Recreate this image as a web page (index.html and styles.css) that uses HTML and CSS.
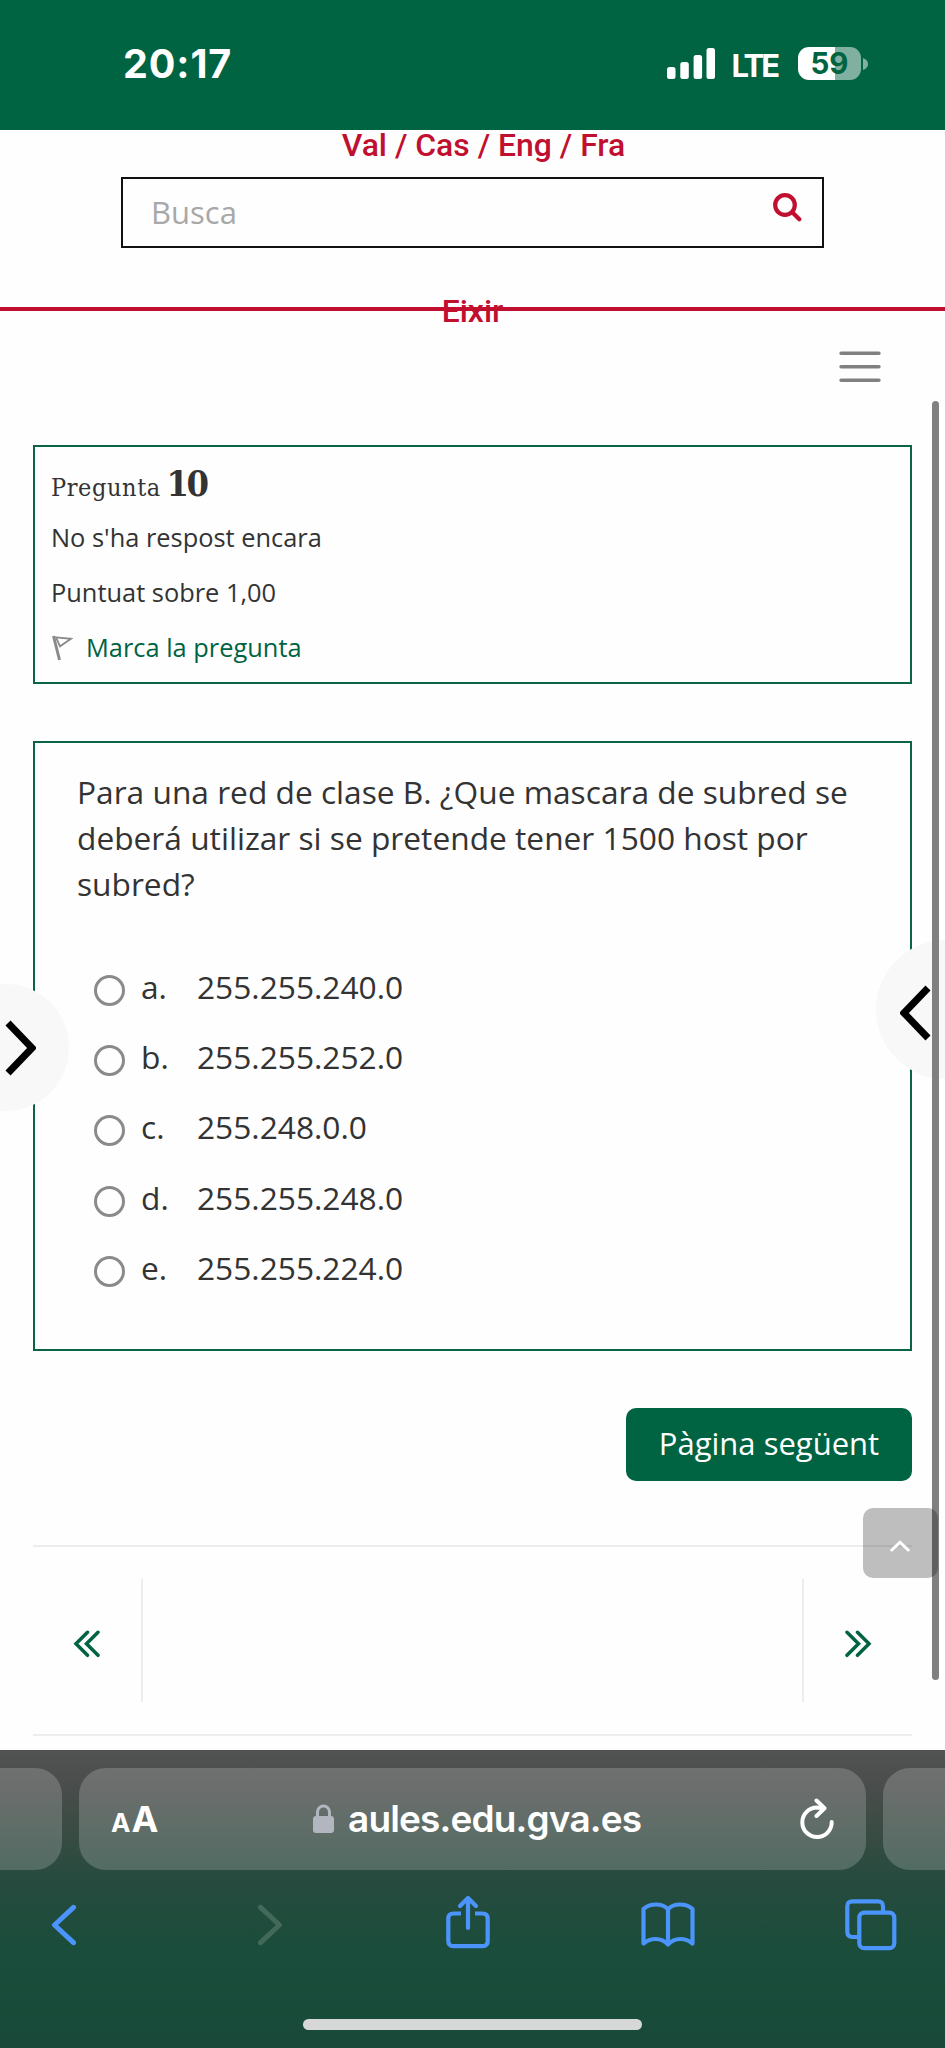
FILE: index.html
```html
<!DOCTYPE html>
<html lang="ca">
<head>
<meta charset="utf-8">
<title>Aules</title>
<link rel="stylesheet" href="styles.css">
</head>
<body>
<div class="screen">
  <header class="status">
    <span class="time">20:17</span>
    <div class="indicators">
      <svg class="signal" width="48" height="31" viewBox="0 0 48 31" fill="#fff"><rect x="0" y="19" width="8.5" height="12" rx="2.5"/><rect x="13.3" y="14" width="8.5" height="17" rx="2.5"/><rect x="26.6" y="7" width="8.5" height="24" rx="2.5"/><rect x="39.5" y="0" width="8.5" height="31" rx="2.5"/></svg>
      <span class="lte">LTE</span>
      <div class="battery"><span class="level">59</span></div>
      <svg class="nub" width="5" height="12" viewBox="0 0 5 12"><path d="M0 0Q5 2 5 6T0 12Z" fill="#80b1a0"/></svg>
    </div>
  </header>

  <div class="site-head">
    <nav class="langs">Val / Cas / Eng / Fra</nav>
    <div class="search">
      <span class="placeholder">Busca</span>
      <svg class="search-icon" width="29" height="29" viewBox="0 0 29 29" fill="none" stroke="#c10f2f" stroke-linecap="round"><circle cx="12" cy="12" r="9.8" stroke-width="4.2"/><path d="M19.5 19.5L26.3 26.3" stroke-width="4.2"/></svg>
    </div>
    <div class="logout"><a class="exit">Eixir</a></div>
  </div>

  <main class="content">
    <div class="menu-row">
      <svg width="42" height="32" viewBox="0 0 42 32" stroke="#808080" stroke-width="3.4" stroke-linecap="round"><path d="M2 2.3H40M2 15.8H40M2 29.3H40"/></svg>
    </div>
    <section class="card info">
      <h3 class="qno">Pregunta <b class="num">10</b></h3>
      <p class="meta">No s'ha respost encara</p>
      <p class="meta">Puntuat sobre 1,00</p>
      <p class="meta flag">
        <svg width="22" height="26" viewBox="0 0 22 26" fill="none" stroke="#8a8a8a"><path d="M2.5 1L8.5 25" stroke-width="3"/><path d="M5 2.3L20 3.8L9 11.3Z" stroke-width="1.8"/></svg>
        <a class="mark">Marca la pregunta</a>
      </p>
    </section>
    <section class="card question">
      <p class="qtext">Para una red de clase B. ¿Que mascara de subred se<br>deberá utilizar si se pretende tener 1500 host por<br>subred?</p>
      <div class="answers">
        <div class="answer"><i class="radio"></i><span class="letter">a.</span><span class="value">255.255.240.0</span></div>
        <div class="answer"><i class="radio"></i><span class="letter">b.</span><span class="value">255.255.252.0</span></div>
        <div class="answer"><i class="radio"></i><span class="letter">c.</span><span class="value">255.248.0.0</span></div>
        <div class="answer"><i class="radio"></i><span class="letter">d.</span><span class="value">255.255.248.0</span></div>
        <div class="answer"><i class="radio"></i><span class="letter">e.</span><span class="value">255.255.224.0</span></div>
      </div>
    </section>
    <div class="actions"><div class="next">Pàgina següent</div></div>
    <nav class="pager">
      <div class="prev-act"><svg width="28" height="28" viewBox="0 0 28 28" fill="none" stroke="#006442" stroke-width="3.5" stroke-linecap="round"><path d="M14.5 2.3L3 13.8L14.5 25.3M25 2.3L13.5 13.8L25 25.3"/></svg></div>
      <div class="next-act"><svg width="28" height="28" viewBox="0 0 28 28" fill="none" stroke="#006442" stroke-width="3.5" stroke-linecap="round"><path d="M3 2.3L14.5 13.8L3 25.3M13.5 2.3L25 13.8L13.5 25.3"/></svg></div>
    </nav>
  </main>

  <footer class="safari">
    <div class="tabs">
      <div class="tab side-left"></div>
      <div class="tab current">
        <span class="aa"><small class="a-small">A</small>A</span>
        <div class="address">
          <svg width="21" height="29" viewBox="0 0 21 29"><rect x="0" y="12" width="21" height="17" rx="3" fill="#b2b7bf"/><path d="M4.5 13V8a6 6 0 0 1 12 0V13" fill="none" stroke="#b2b7bf" stroke-width="3"/></svg>
          <span class="url">aules.edu.gva.es</span>
        </div>
        <svg class="reload" width="34" height="42" viewBox="0 0 34 42" fill="none" stroke="#fff" stroke-width="4" stroke-linecap="round" stroke-linejoin="round"><path d="M31.7 24A14.7 14.7 0 1 1 17 9.6L23 10.3"/><path d="M16.5 2.5L24.5 10.3L16.5 18"/></svg>
      </div>
      <div class="tab side-right"></div>
    </div>
    <div class="toolbar">
      <svg class="back" width="26" height="42" viewBox="0 0 26 42" fill="none" stroke="#4a94fb" stroke-width="5" stroke-linecap="round" stroke-linejoin="round"><path d="M22.5 3.3L3.5 21L22.5 38.7"/></svg>
      <svg class="forward" width="26" height="42" viewBox="0 0 26 42" fill="none" stroke="#42695a" stroke-width="5" stroke-linecap="round" stroke-linejoin="round"><path d="M3.5 3.3L22.5 21L3.5 38.7"/></svg>
      <svg class="share" width="44" height="54" viewBox="0 0 44 54" fill="none" stroke="#4a94fb" stroke-width="4.2" stroke-linecap="round" stroke-linejoin="round"><path stroke-linecap="butt" d="M15 18.5H7.5Q2.3 18.5 2.3 23.7V46Q2.3 51.2 7.5 51.2H36.5Q41.7 51.2 41.7 46V23.7Q41.7 18.5 36.5 18.5H29"/><path d="M22 33V3.5M14 11L22 3L30 11"/></svg>
      <svg class="book" width="54" height="46" viewBox="0 0 54 46" fill="none" stroke="#4a94fb" stroke-width="4.2" stroke-linecap="round" stroke-linejoin="round"><path d="M27 7.5Q23 2.5 15 2.5Q7 2.5 2.5 7V41.5Q8 37 14.5 37Q22 37 27 42.5Q32 37 39.5 37Q46 37 51.5 41.5V7Q47 2.5 39 2.5Q31 2.5 27 7.5V42"/></svg>
      <svg class="windows" width="52" height="52" viewBox="0 0 52 52" fill="none" stroke="#4a94fb" stroke-width="4.2"><rect x="14.3" y="13.6" width="35" height="35.6" rx="5"/><path d="M38 13V7.5Q38 2.3 32.8 2.3H7.5Q2.3 2.3 2.3 7.5V32.8Q2.3 38 7.5 38H14"/></svg>
    </div>
    <div class="home"></div>
  </footer>

  <div class="drawer drawer-left"><svg width="35" height="56" viewBox="0 0 35 56" fill="none" stroke="#000" stroke-width="7"><path d="M7 3L31 28L7 53"/></svg></div>
  <div class="drawer drawer-right"><svg width="35" height="56" viewBox="0 0 35 56" fill="none" stroke="#000" stroke-width="7"><path d="M28 3L4 28L28 53"/></svg></div>
  <div class="scrollbar"></div>
  <div class="to-top"><svg width="20" height="12" viewBox="0 0 20 12" fill="none" stroke="#fff" stroke-width="3" stroke-linecap="round"><path d="M1.8 10L10 2.2L18.2 10"/></svg></div>
</div>
</body>
</html>
```
FILE: styles.css
```css
* { box-sizing: border-box; margin: 0; padding: 0; }
body { background: #fff; }
.screen {
  position: relative;
  width: 945px;
  height: 2048px;
  overflow: hidden;
  display: flex;
  flex-direction: column;
  background: #fefefe;
  color: #333;
  font-family: "Open Sans", "Noto Sans", sans-serif;
  font-size: 31.7px;
}
svg { display: block; flex: none; }

/* status bar */
.status {
  height: 129.5px;
  padding: 0 77px 0 123px;
  background: #006442;
  display: flex;
  justify-content: space-between;
  color: #fff;
  font-family: Inter, sans-serif;
  line-height: 1;
}
.time { padding-top: 45px; font-size: 39.5px; font-weight: 700; letter-spacing: .9px; }
.indicators { display: flex; padding-top: 47px; }
.signal { margin-top: 1px; margin-right: 17px; }
.lte { width: 66.5px; font-size: 31px; font-weight: 700; padding-top: 3px; letter-spacing: -2.8px; }
.battery {
  width: 63px;
  height: 33px;
  border-radius: 11px;
  background: linear-gradient(90deg, #fff 37px, #80b1a0 37px);
  text-align: center;
}
.level { font-size: 29.5px; line-height: 33px; font-weight: 700; color: #006442; }
.nub { margin: 11px 0 0 2px; }

/* site header */
.site-head { display: flex; flex-direction: column; align-items: center; }
.langs, .exit { font: 500 31.9px/31px Roboto, sans-serif; color: #c10f2f; }
.langs { padding-left: 22px; height: 47.5px; }
.search {
  width: 703px;
  height: 71px;
  border: 2.4px solid #111;
  padding: 0 20px 0 28px;
  display: flex;
  justify-content: space-between;
}
.placeholder { line-height: 66px; color: #a8a8a8; font-size: 31px; }
.search-icon { margin-top: 14px; }
.logout {
  width: 945px;
  height: 63px;
  border-bottom: 4.5px solid #c10f2f;
  text-align: center;
}
.exit { display: block; padding-top: 48px; }

/* question page */
.content { padding: 0 33px; height: 1439px; }
.menu-row { height: 134px; padding: 40px 31px 0 0; display: flex; justify-content: flex-end; }
.card { border: 2px solid #0b6446; }
.info { height: 239px; padding: 14px 16px; }
.qno { font: 400 25px/45px "DejaVu Serif Condensed", "DejaVu Serif", serif; letter-spacing: .6px; }
.num { font-size: 36px; letter-spacing: -2.5px; margin-left: -2px; }
.meta { font-size: 25.4px; line-height: 55px; }
.flag { display: flex; align-items: center; gap: 13px; }
.mark { color: #006442; }
.question { margin-top: 57px; height: 610px; padding: 26px 42px; }
.qtext { line-height: 46.2px; white-space: nowrap; }
.answers { padding: 44px 0 0 17px; }
.answer { display: flex; align-items: center; height: 70.3px; }
.radio { width: 31px; height: 31px; margin: 7px 16px 0 0; border: 3.4px solid #8a8a8a; border-radius: 50%; }
.letter { width: 56px; }
.letter, .value { padding-bottom: 1px; }
.actions { display: flex; justify-content: flex-end; padding-top: 57px; }
.next {
  width: 286px;
  height: 73px;
  border-radius: 10px;
  background: #006442;
  color: #fff;
  text-align: center;
  font-size: 31px;
  line-height: 70px;
}
.pager {
  margin-top: 64px;
  height: 191px;
  border-top: 2px solid #ededed;
  border-bottom: 2px solid #ededed;
  padding: 32px 0;
  display: flex;
  justify-content: space-between;
}
.prev-act, .next-act { width: 110px; height: 123px; padding-top: 51px; }
.prev-act { padding-left: 40px; border-right: 2px solid #ededed; }
.next-act { padding-left: 40px; border-left: 2px solid #ededed; }

/* browser chrome */
.safari {
  flex: none;
  height: 297.5px;
  background: linear-gradient(#505352 0, #4a4d4b 35px, #3c4c45 75px, #274b3e 128px, #1a4d3b 200px, #194a39 297px);
}
.tabs { display: flex; gap: 17px; padding-top: 17.5px; }
.tab { height: 102px; background: rgba(255, 255, 255, .19); }
.side-left { width: 62px; border-radius: 0 27px 27px 0; }
.side-right { width: 62px; border-radius: 27px 0 0 27px; }
.current { width: 787px; border-radius: 27px; padding: 0 32px 0 32px; display: flex; align-items: center; justify-content: space-between; color: #fff; font-family: Inter, sans-serif; }
.aa { font-size: 36px; font-weight: 700; letter-spacing: -1px; }
.a-small { font-size: 26px; margin-right: 2px; }
.address { display: flex; align-items: center; gap: 14px; margin-right: 3px; }
.url { font-size: 37px; font-weight: 600; letter-spacing: -.85px; }
.toolbar { display: flex; padding-top: 25px; height: 149px; }
.back { margin: 9px 0 0 51px; }
.forward { margin: 9px 0 0 180px; }
.share { margin-left: 163px; }
.book { margin: 7px 0 0 151px; }
.windows { margin: 4px 0 0 150px; }
.home { width: 339px; height: 11.5px; margin: 0 auto; border-radius: 6px; background: #d6d8d7; }

/* floating controls over the page */
.drawer { position: absolute; border-radius: 50%; background: #f8f8f8; }
.drawer-left { width: 127px; height: 127px; left: -58px; top: 984px; padding: 36px 0 0 59px; }
.drawer-right { width: 139px; height: 139px; left: 876px; top: 940px; padding: 45px 0 0 24px; }
.scrollbar { position: absolute; left: 932px; top: 401px; width: 6.5px; height: 1279px; border-radius: 4px; background: #808080; }
.to-top { position: absolute; left: 863px; top: 1508px; width: 75px; height: 70px; border-radius: 10px; background: rgba(0, 0, 0, .25); padding: 32px 0 0 27px; }
```
